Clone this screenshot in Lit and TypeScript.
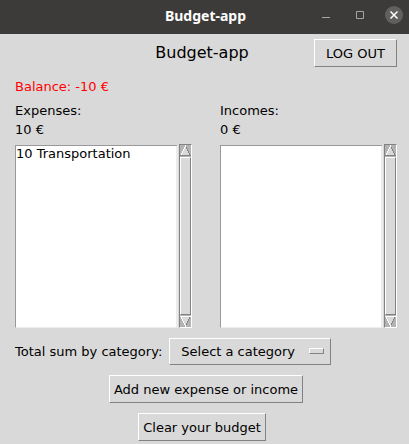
import { LitElement, html, css, svg } from "lit";
import { customElement, property } from "lit/decorators.js";

@customElement("tk-scrollbar")
export class TkScrollbar extends LitElement {
  static styles = css`
    :host {
      display: flex;
      flex-direction: column;
      box-sizing: border-box;
      width: 13px;
      border: 1px solid;
      border-color: #828282 #fff #fff #828282;
      background: #b3b3b3;
    }
    button {
      display: block;
      margin: 0;
      padding: 0;
      border: 0;
      background: none;
      height: 11px;
    }
    svg {
      display: block;
      width: 11px;
      height: 11px;
    }
    .thumb {
      flex: 1;
      margin: 1px 0;
      border: 1px solid;
      border-color: #fff #828282 #828282 #fff;
      background: #d9d9d9;
    }
  `;

  // Bevelled triangle, built of two-pixel steps from the tip to the base.
  private arrow(up: boolean) {
    const steps = [0, 1, 2, 3, 4];
    const top = (k: number) => (up ? 2 * k : 9 - 2 * k);
    return html`<svg viewBox="0 0 11 11" shape-rendering="crispEdges">
      ${steps.map(
        (k) => svg`
          <rect x=${5 - k} y=${top(k)} width=${2 * k + 1} height="2" fill="#d9d9d9" />
          <rect x=${5 + k} y=${top(k)} width="1" height="2" fill="#828282" />
          <rect x=${5 - k} y=${top(k)} width="1" height="2" fill="#fff" />`
      )}
      <rect x="0" y=${up ? 10 : 0} width="11" height="1" fill=${up ? "#828282" : "#fff"} />
    </svg>`;
  }

  render() {
    return html`
      <button aria-label="Scroll up">${this.arrow(true)}</button>
      <div class="thumb"></div>
      <button aria-label="Scroll down">${this.arrow(false)}</button>
    `;
  }
}

@customElement("entry-list")
export class EntryList extends LitElement {
  @property() label = "";
  @property() total = "";
  @property({ type: Array }) items: string[] = [];

  static styles = css`
    :host {
      display: block;
      min-width: 0;
    }
    .line {
      display: block;
      line-height: 19px;
    }
    .box {
      display: flex;
      align-items: stretch;
      gap: 1px;
      margin-top: 5px;
    }
    select {
      appearance: none;
      flex: 1;
      min-width: 0;
      box-sizing: border-box;
      height: 183px;
      margin: 1px 0 0;
      padding: 0;
      overflow: hidden;
      border: 1px solid;
      border-right-width: 2px;
      border-color: #999 #ececec #ececec #999;
      border-radius: 0;
      outline: 0;
      background: #fff;
      color: #000;
      font: inherit;
    }
    option {
      padding: 0;
      min-height: 19px;
      line-height: 19px;
    }
  `;
  render() {
    return html`
      <label class="line" for="list">${this.label}</label>
      <span class="line">${this.total}</span>
      <div class="box">
        <select id="list" size="10">
          ${this.items.map((i) => html`<option>${i}</option>`)}
        </select>
        <tk-scrollbar></tk-scrollbar>
      </div>
    `;
  }
}

@customElement("app-root")
export class AppRoot extends LitElement {
  static styles = css`
    :host {
      display: block;
      min-height: 100vh;
      background: #d9d9d9;
      color: #000;
      font: 13px "DejaVu Sans", sans-serif;
    }
    .titlebar {
      display: grid;
      grid-template-columns: 1fr auto 1fr;
      align-items: center;
      box-sizing: border-box;
      height: 34px;
      padding: 0 6px 4px 8px;
      background: #3d3b39;
      color: #fff;
    }
    .caption {
      grid-column: 2;
      font: bold 14px "Noto Sans", sans-serif;
    }
    .controls {
      display: flex;
      justify-content: flex-end;
      gap: 16px;
    }
    .control {
      width: 18px;
      height: 18px;
      padding: 0;
      border: 0;
      background: none;
    }
    .control svg {
      display: block;
    }
    .content {
      padding: 5px 12px 3px 15px;
    }
    .header {
      display: grid;
      align-items: center;
    }
    .header > * {
      grid-area: 1 / 1;
    }
    h1 {
      margin: 0;
      font-size: 16px;
      font-weight: normal;
      line-height: 28px;
    }
    .inset {
      justify-self: center;
      margin-right: 8px;
    }
    .logout {
      justify-self: end;
    }
    .button {
      box-sizing: border-box;
      height: 28px;
      padding: 0 4px;
      border: 1px solid;
      border-color: #fff #828282 #828282 #fff;
      border-radius: 0;
      background: #d9d9d9;
      color: #000;
      font: inherit;
    }
    .logout.button {
      padding: 0 11px;
    }
    .balance {
      margin: 10px 0 4px;
      line-height: 20px;
      color: #f00;
    }
    .lists {
      display: grid;
      grid-template-columns: 1fr 1fr;
      gap: 28px;
    }
    .category {
      display: flex;
      align-items: center;
      gap: 7px;
      margin-top: 10px;
    }
    .menu {
      position: relative;
      display: flex;
    }
    .menu select {
      appearance: none;
      height: 27px;
      padding: 0 35px 0 11px;
    }
    .indicator {
      position: absolute;
      right: 7px;
      top: 10px;
      box-sizing: border-box;
      width: 15px;
      height: 6px;
      border: 1px solid;
      border-color: #fff #828282 #828282 #fff;
      pointer-events: none;
    }
    .actions {
      display: grid;
      justify-items: center;
      gap: 10px;
      margin-top: 10px;
    }
  `;

  render() {
    return html`
      <header class="titlebar">
        <span class="caption">Budget-app</span>
        <div class="controls">
          <button class="control" aria-label="Minimize">
            <svg width="18" height="18"><path d="M5 11.5H13" stroke="#a5a4a2" /></svg>
          </button>
          <button class="control" aria-label="Maximize">
            <svg width="18" height="18">
              <path d="M5.5 5.5H12.5V12.5H5.5Z" fill="none" stroke="#a5a4a2" />
            </svg>
          </button>
          <button class="control" aria-label="Close">
            <svg width="18" height="18">
              <circle cx="9" cy="9" r="9" fill="#62605f" />
              <path d="M5.5 5.5L12.5 12.5M12.5 5.5L5.5 12.5" stroke="#fff" stroke-width="1.5" />
            </svg>
          </button>
        </div>
      </header>
      <main class="content">
        <div class="header">
          <h1 class="inset">Budget-app</h1>
          <button class="button logout">LOG OUT</button>
        </div>
        <p class="balance">Balance: -10 €</p>
        <div class="lists">
          <entry-list label="Expenses:" total="10 €" .items=${["10 Transportation"]}></entry-list>
          <entry-list label="Incomes:" total="0 €"></entry-list>
        </div>
        <div class="category">
          <label for="category">Total sum by category:</label>
          <div class="menu">
            <select id="category" class="button">
              <option>Select a category</option>
            </select>
            <span class="indicator"></span>
          </div>
        </div>
        <div class="actions">
          <button class="button">Add new expense or income</button>
          <button class="button inset">Clear your budget</button>
        </div>
      </main>
    `;
  }
}
